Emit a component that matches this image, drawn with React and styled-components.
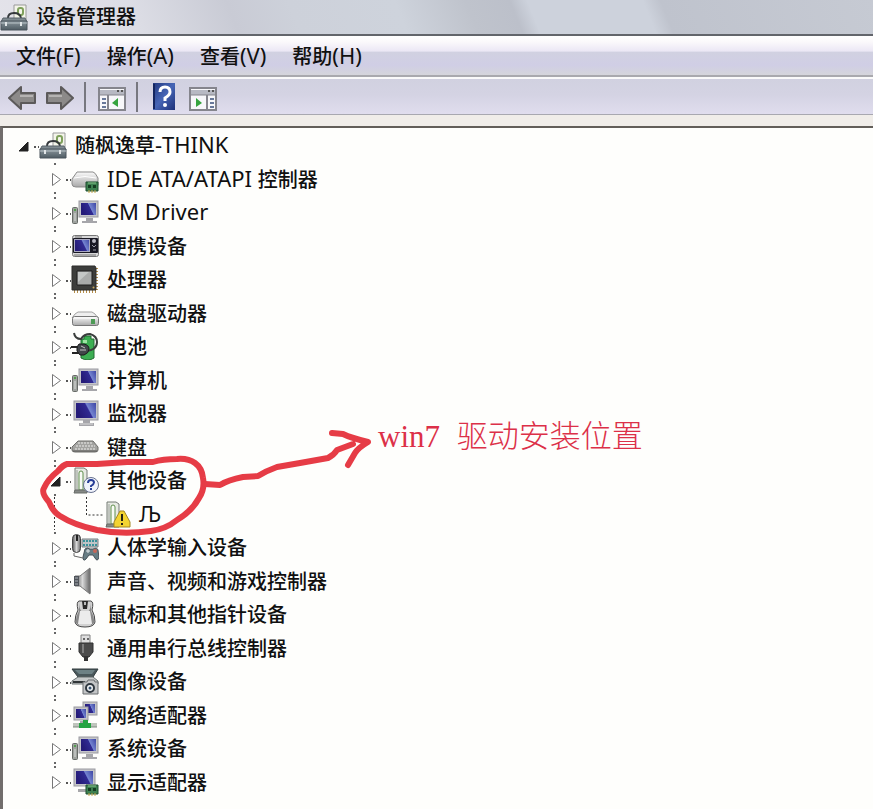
import React, { useState } from 'react';
import styled, { createGlobalStyle } from 'styled-components';

const GlobalStyle = createGlobalStyle`
  * {
    box-sizing: border-box;
  }

  body {
    margin: 0;
    background: #fefefc;
    color: #101010;
    font-family: 'Noto Sans', 'Noto Sans CJK SC', sans-serif;
    font-size: 20px;
    font-weight: 500;
  }

  button {
    padding: 0;
    border: none;
    background: none;
    color: inherit;
    font: inherit;
    cursor: pointer;
  }

  svg {
    display: block;
  }
`;

const Window = styled.div`
  display: flex;
  flex-direction: column;
  min-height: 100vh;
`;

const TitleBar = styled.header`
  display: flex;
  align-items: center;
  gap: 8px;
  height: 36px;
  border-bottom: 2px solid #62656b;
  background: linear-gradient(
    68deg,
    #e4e3ea 0%,
    #dcdde5 16%,
    #c9cbd5 27%,
    #cdd1da 34%,
    #ced3dc 46%,
    #bfc3cc 54%,
    #bcc0ca 59%,
    #cdd2dc 61%,
    #cdd2dc 74%,
    #bfc3cd 76%,
    #c6cad3 100%
  );
`;

const Title = styled.h1`
  margin: 0;
  font-size: 20px;
  font-weight: 500;
  line-height: 36px;
`;

const MenuBar = styled.nav`
  display: flex;
  gap: 26px;
  height: 41px;
  padding: 0 16px;
  border-bottom: 2px solid #a9a9ae;
  background: linear-gradient(#ffffff 0%, #fbf9fb 15%, #ebe7f5 39%, #d1d1e1 41%, #d0cee5 75%, #d5d5db 100%);
`;

const MenuItem = styled.button`
  height: 39px;
  padding-top: 2px;
  line-height: 36px;
`;

const Latin = styled.span`
  font-size: 22px;
  font-weight: 400;
  line-height: 20px;
`;

const ToolBar = styled.div`
  display: flex;
  align-items: center;
  height: 38px;
  padding: 0 8px;
  border-top: 2px solid #fafafa;
  border-bottom: 1px solid #a8a8b0;
  background: linear-gradient(#d1d1e0, #d4d3e3 45%, #e0ddee);
`;

const ToolButton = styled.button`
  margin-right: ${(props) => props.$space || 0}px;
`;

const Separator = styled.span`
  width: 2px;
  height: 30px;
  margin-right: ${(props) => props.$space}px;
  background: #77777f;
`;

const Pane = styled.main`
  position: relative;
  flex: 1;
  margin-top: 11px;
  border-top: 2px solid #625e59;
  border-left: 3px solid #716d6c;
  background: #fefefc;
  box-shadow: 0 -11px 0 #f0ede9;
`;

const Tree = styled.ul`
  margin: 0;
  padding: 0;
  list-style: none;
`;

const TreeRow = styled.li`
  display: flex;
  align-items: center;
  height: 34px;
  padding-left: ${(props) => 9 + props.$level * 32}px;

  &:nth-child(even) {
    height: 33px;
  }
`;

const Expander = styled.button`
  flex: none;
  width: 27px;
  height: 33px;
`;

const Label = styled.span`
  margin-left: 8px;
  padding-top: 2px;
  line-height: 32px;
  white-space: nowrap;
`;

const Scribble = styled.svg`
  position: absolute;
  left: 35px;
  top: 299px;
  pointer-events: none;
`;

const Note = styled.p`
  position: absolute;
  left: 375px;
  top: 287px;
  margin: 0;
  color: #dc3048;
  font-family: 'Liberation Serif', 'Noto Sans CJK SC', serif;
  font-size: 31px;
  font-weight: 300;
  line-height: 44px;
  white-space: nowrap;
`;

const NoteWord = styled.span`
  margin-right: 9px;
`;

const Gradients = () => (
  <svg width="0" height="0" aria-hidden="true">
    <defs>
      <linearGradient id="screen" x1="0" y1="0.4" x2="1" y2="0">
        <stop offset="0" stopColor="#251b78" />
        <stop offset="0.5" stopColor="#302a92" />
        <stop offset="0.56" stopColor="#7484d0" />
        <stop offset="1" stopColor="#3c44a4" />
      </linearGradient>
      <linearGradient id="silver" x1="0" y1="0" x2="0" y2="1">
        <stop offset="0" stopColor="#fafafa" />
        <stop offset="1" stopColor="#a9a9a9" />
      </linearGradient>
      <linearGradient id="steel" x1="0" y1="0" x2="1" y2="0">
        <stop offset="0" stopColor="#555" />
        <stop offset="0.5" stopColor="#d8d8d8" />
        <stop offset="1" stopColor="#666" />
      </linearGradient>
      <linearGradient id="case" x1="0" y1="0" x2="0" y2="1">
        <stop offset="0" stopColor="#8b979d" />
        <stop offset="1" stopColor="#4e5b63" />
      </linearGradient>
      <linearGradient id="help" x1="0" y1="0" x2="1" y2="1">
        <stop offset="0" stopColor="#22397f" />
        <stop offset="0.5" stopColor="#4665b5" />
        <stop offset="1" stopColor="#1c2f78" />
      </linearGradient>
    </defs>
  </svg>
);

const Icon = ({ children }) => (
  <svg width="28" height="28" viewBox="0 0 28 28" fill="none" aria-hidden="true">
    {children}
  </svg>
);

const ToolboxIcon = () => (
  <Icon>
    <path d="M14 2h12v17H14z" fill="#f4f5ea" stroke="#999" />
    <rect x="18" y="5" width="5" height="7" rx="2" stroke="#7fa05c" strokeWidth="2" />
    <path d="M8 15q0-5 6-5t7 5" stroke="#35393c" strokeWidth="2" />
    <path d="M3 15h22l2 4H1z" fill="#7f8a90" stroke="#59636a" />
    <path d="M1 18h26v9H1z" fill="url(#case)" stroke="#4a555c" />
    <path d="M1 20h26" stroke="#b7c1c6" />
    <path d="M6 19v4M21 19v4" stroke="#e1e5e7" strokeWidth="2" />
  </Icon>
);

const Screen = ({ x, y, w, h }) => (
  <>
    <rect x={x} y={y} width={w} height={h} fill="#c5c5c9" stroke="#99999f" />
    <rect x={x + 2} y={y + 2} width={w - 4} height={h - 4} fill="url(#screen)" />
  </>
);

const Tower = () => (
  <>
    <path d="M4 25V2h9l3 2v22z" fill="#e7eae3" stroke="#747a74" />
    <path d="M8 24V7q0-2 2-2t2 2v17z" fill="#f8faf5" stroke="#5f8f4c" />
    <path d="M6 4v20" stroke="#9aa09a" />
    <path d="M4 24h12v3H3z" fill="#858985" stroke="#686c68" />
  </>
);

const BoardIcon = () => (
  <>
    <path d="M15 17h12v9H15z" fill="#3d8050" stroke="#1d4e2e" />
    <path d="M17 20h3v3h-3zM22 20h3v3h-3z" fill="#153c22" />
    <path d="M18 25v3M21 25v3M24 25v3" stroke="#c4a84a" />
    <path d="M17 18h8" stroke="#8bc48f" />
  </>
);

const ComputerIcon = () => (
  <Icon>
    <Screen x={8} y={3} w={19} h={16} />
    <path d="M15 20h7v3h4v2H11v-2h4z" fill="#a6a6aa" />
    <rect x="1.5" y="9.5" width="5" height="16" rx="1" fill="#9ea29e" stroke="#686c68" />
    <path d="M3 12h2" stroke="#55a050" strokeWidth="2" />
    <path d="M4 15v8" stroke="#dadcda" />
  </Icon>
);

const icons = {
  toolbox: ToolboxIcon,
  computer: ComputerIcon,
  ide: () => (
    <Icon>
      <path d="M6 7h16q2 0 5 6v7q0 2-4 2H5q-4 0-4-3v-5z" fill="url(#silver)" stroke="#8b8b8b" />
      <path d="M3 13q11-3 22 0" stroke="#fff" />
      <BoardIcon />
    </Icon>
  ),
  portable: () => (
    <Icon>
      <rect x="1.5" y="3.5" width="26" height="21" rx="2" fill="#d7d7d7" stroke="#777" />
      <rect x="2" y="6" width="25" height="15" rx="1" fill="#191923" />
      <rect x="3.500" y="7.500" width="15" height="12" fill="url(#screen)" stroke="#a9a9c0" />
      <circle cx="23" cy="9" r="2" fill="#b9b9c2" />
      <path d="M21 13l2 2 2-2M22 18h3" stroke="#9a9aa6" />
      <path d="M4 5h7M3 23h22" stroke="#777" />
    </Icon>
  ),
  cpu: () => (
    <Icon>
      <path d="M25 3v22M3 26h22" stroke="#b58d48" strokeWidth="4" strokeDasharray="1 2" />
      <path d="M1 1h23l1 2v22H1z" fill="#3c3d3b" stroke="#2c2d2b" />
      <path d="M6 6h15v14H6z" fill="#a9abaa" stroke="#1f1f1f" />
      <path d="M7 17V7h11z" fill="#c4c7c6" />
      <circle cx="22.5" cy="22.5" r="1" fill="#c8a557" />
    </Icon>
  ),
  disk: () => (
    <Icon>
      <path d="M7 13h14q3 1 6 6H1q3-5 6-6z" fill="#efefef" stroke="#a4a4a4" />
      <rect x="1.5" y="17.5" width="26" height="9" rx="2" fill="url(#silver)" stroke="#777" />
      <path d="M3 19h22" stroke="#fff" />
      <path d="M20 20h4v5h-4z" fill="#4d9b55" />
    </Icon>
  ),
  battery: () => (
    <Icon>
      <path d="M10 7h3V4h7v3h3v19q-6 4-13 0z" fill="#3cae52" stroke="#216b31" />
      <path d="M14 8v3" stroke="#9de3a2" strokeWidth="4" />
      <path d="M3 1q1 6 7 6 3-5 9-5 7 2 7 8 0 8-11 9" stroke="#3a3d3c" strokeWidth="2" />
      <path d="M8 12h5q5 1 5 5t-5 6H9l-3-4v-4z" fill="#42464a" stroke="#1b1b1b" />
      <path d="M0 15h7M1 21h7" stroke="#242424" strokeWidth="2" />
      <path d="M10 14l4 2M9 18h6" stroke="#c4c4c4" />
    </Icon>
  ),
  monitor: () => (
    <Icon>
      <Screen x={3} y={2} w={24} h={19} />
      <path d="M12 21h7v3h4v3H8v-3h4z" fill="#a6a6aa" />
      <path d="M9 25h13" stroke="#dadada" />
    </Icon>
  ),
  keyboard: () => (
    <Icon>
      <path d="M7 8h15l5 6v3q0 2-3 2H4q-3 0-3-2v-3z" fill="#a3a3a0" stroke="#6e6e6b" />
      <path d="M7 10h15M5 13h19M4 16h21" stroke="#ececea" strokeDasharray="2 1" />
      <path d="M2 18h24" stroke="#585856" />
    </Icon>
  ),
  unknown: () => (
    <Icon>
      <Tower />
      <circle cx="20" cy="19" r="7.5" fill="#f0f3fb" stroke="#66708e" />
      <path d="M17 17q0-3 3-3t3 2.500q0 1.500-3 3.500v1M20 22v2" stroke="#263d97" strokeWidth="2" />
    </Icon>
  ),
  warning: () => (
    <Icon>
      <Tower />
      <path d="M17 11h4l6 11v5H11v-5z" fill="#f3d431" stroke="#a48721" strokeLinejoin="round" />
      <path d="M19 14v7M19 23v2" stroke="#272314" strokeWidth="2" />
    </Icon>
  ),
  hid: () => (
    <Icon>
      <path d="M11 6h16v8H11z" fill="#bfc4c6" stroke="#777f82" />
      <path d="M12 8h14M12 12h15" stroke="#3b929a" strokeWidth="2" strokeDasharray="2 1" />
      <path d="M14 16q2-2 5 0h3q4-2 5 1l1 8q-2 4-4 0l-2-3h-4l-3 4q-3 3-3-2z" fill="#687e85" stroke="#465158" />
      <path d="M15 18h4M17 16v4" stroke="#e2e6e8" />
      <circle cx="24" cy="18" r="2" fill="#c56759" />
      <rect x="1.500" y="1.500" width="8" height="18" rx="4" fill="url(#steel)" stroke="#424242" />
      <path d="M6 2v6" stroke="#222" strokeWidth="2" />
      <path d="M3 20v3l9 2" stroke="#666" />
    </Icon>
  ),
  sound: () => (
    <Icon>
      <path d="M4 9h5L19 1v26L9 19H4z" fill="url(#steel)" stroke="#777" />
      <path d="M3 9h5v10H3z" fill="#50545a" />
      <path d="M4 11h3M4 14h3M4 17h3" stroke="#abb0b6" />
      <path d="M19 2v24" stroke="#777" />
    </Icon>
  ),
  mouse: () => (
    <Icon>
      <path d="M8 1h12q3 1 1 9 3 5 3 12-1 5-10 5T4 22q0-7 3-12-2-8 1-9z" fill="#d2d2d2" stroke="#484848" />
      <path d="M8 2q0 7 3 10-4 5-3 13-4-1-3-5 0-4 3-9zM20 2q0 7-3 10 4 5 3 13 4-1 3-5 0-4-3-9z" fill="#888" />
      <path d="M9 11h10l2 13H7z" fill="#ececec" />
      <path d="M11 1h6l-1 8h-4z" fill="#292929" />
      <path d="M14 2v3" stroke="#bbb" strokeWidth="2" />
    </Icon>
  ),
  usb: () => (
    <Icon>
      <path d="M10 1h9v9h-9z" fill="#dedede" stroke="#808080" />
      <path d="M12 4h2v2h-2zM16 4h2v2h-2z" fill="#666" />
      <path d="M8 9h14v9l-4 5h-6l-4-5z" fill="#4b4b4b" stroke="#303030" />
      <path d="M12 10v9" stroke="#7d7d7d" strokeWidth="2" />
      <path d="M15 22v5" stroke="#333" strokeWidth="4" />
    </Icon>
  ),
  imaging: () => (
    <Icon>
      <path d="M1 2h26l-5 8H7z" fill="#49575a" stroke="#303b3d" />
      <path d="M4 3h20l-3 4H8z" fill="#6d8184" />
      <path d="M1 14l6-4h15l5 4v3H1z" fill="#c5c8c8" stroke="#687071" />
      <path d="M2 15h12" stroke="#313638" strokeWidth="2" />
      <path d="M12 15h4l1-2h6l1 2h3v12H12z" fill="#c3c5c6" stroke="#6b6e70" />
      <circle cx="19" cy="21" r="4" fill="#f0f3f5" stroke="#2f383f" strokeWidth="2" />
      <circle cx="19" cy="21" r="1.500" fill="#34506c" />
    </Icon>
  ),
  network: () => (
    <Icon>
      <Screen x={12} y={1} w={14} h={13} />
      <Screen x={3} y={6} w={14} h={13} />
      <path d="M9 20h6v2H9z" fill="#a7a7aa" />
      <path d="M2 24h24" stroke="#bfc5bd" strokeWidth="4" />
      <path d="M2 26h24" stroke="#7d877d" />
      <path d="M12 19h5v3h3v5H8v-5h4z" fill="#26a443" />
    </Icon>
  ),
  display: () => (
    <Icon>
      <Screen x={3} y={1} w={21} h={17} />
      <path d="M11 18h5v3H7v3h9v-6z" fill="#a7a7aa" />
      <BoardIcon />
    </Icon>
  ),
};

const devices = [
  { name: '随枫逸草-THINK', icon: 'toolbox', level: 0, open: true },
  { name: 'IDE ATA/ATAPI 控制器', icon: 'ide', level: 1 },
  { name: 'SM Driver', icon: 'computer', level: 1 },
  { name: '便携设备', icon: 'portable', level: 1 },
  { name: '处理器', icon: 'cpu', level: 1 },
  { name: '磁盘驱动器', icon: 'disk', level: 1 },
  { name: '电池', icon: 'battery', level: 1 },
  { name: '计算机', icon: 'computer', level: 1 },
  { name: '监视器', icon: 'monitor', level: 1 },
  { name: '键盘', icon: 'keyboard', level: 1 },
  { name: '其他设备', icon: 'unknown', level: 1, open: true },
  { name: 'Љ', icon: 'warning', level: 2 },
  { name: '人体学输入设备', icon: 'hid', level: 1 },
  { name: '声音、视频和游戏控制器', icon: 'sound', level: 1 },
  { name: '鼠标和其他指针设备', icon: 'mouse', level: 1 },
  { name: '通用串行总线控制器', icon: 'usb', level: 1 },
  { name: '图像设备', icon: 'imaging', level: 1 },
  { name: '网络适配器', icon: 'network', level: 1 },
  { name: '系统设备', icon: 'computer', level: 1 },
  { name: '显示适配器', icon: 'display', level: 1, last: true },
];

const menus = ['文件(F)', '操作(A)', '查看(V)', '帮助(H)'];

// Latin letters are set a little larger than the Chinese ones
const MixedText = ({ text }) =>
  text
    .split(/([\x20-\x7e\u0400-\u04ff]+)/)
    .filter(Boolean)
    .map((part) => (/^[\x20-\x7e\u0400-\u04ff]/.test(part) ? <Latin key={part}>{part}</Latin> : part));

// Dotted connectors and the triangle in front of a tree item
const Guide = ({ level, open, last }) => (
  <svg width="27" height="33" viewBox="0 0 27 33" fill="none" overflow="visible" aria-hidden="true">
    {level === 2 ? (
      <path d="M10.500 0v18H27M-21.500 0v33" stroke="#333" strokeDasharray="2 2" />
    ) : (
      <>
        {level === 1 && <path d="M10 1h2v2h-2z" fill="#666" />}
        {level === 1 && !last && <path d="M10 30h2v2h-2z" fill="#666" />}
        <path d="M22 17h2v2h-2zM26 17h1v2h-1z" fill="#555" />
        {open ? (
          <path d="M16 13v9H7z" fill="#222" stroke="#222" />
        ) : (
          <path d="M8.500 11.500v12l8-6z" fill="#fff" stroke="#777" />
        )}
      </>
    )}
  </svg>
);

const ArrowIcon = ({ flip }) => (
  <svg width="28" height="28" viewBox="0 0 28 28" aria-hidden="true">
    <path
      d={flip ? 'M27 15L15 4v6H1v10h14v6z' : 'M1 15L13 4v6h14v10H13v6z'}
      fill="#8c8a89"
      stroke="#5c5a5a"
      strokeWidth="2"
      strokeLinejoin="round"
    />
    <path d={flip ? 'M3 13h13' : 'M12 13h13'} stroke="#b5b3b2" strokeWidth="2" />
  </svg>
);

const PanelIcon = ({ right }) => (
  <svg width="28" height="28" viewBox="0 0 28 28" fill="none" aria-hidden="true">
    <path d="M1 5h26v22H1z" fill="#f7f7fa" stroke="#85858d" strokeWidth="2" />
    <path d="M2 7h24v5H2z" fill="#b7b9c3" />
    <path d="M2 12h24" stroke="#85858d" />
    <path d="M19 8h2M23 8h2" stroke="#555" strokeWidth="2" />
    <path d={right ? 'M18 12v15' : 'M10 12v15'} stroke="#85858d" strokeWidth="2" />
    <path d={right ? 'M21 16h4M21 20h4M21 24h4' : 'M4 16h4M4 20h4M4 24h4'} stroke="#68789a" strokeWidth="2" />
    <path d={right ? 'M7 15v9l6-4z' : 'M20 15v9l-6-4z'} fill="#35a33e" />
  </svg>
);

const HelpIcon = () => (
  <svg width="22" height="27" viewBox="0 0 22 27" fill="none" aria-hidden="true">
    <path d="M0 0h22v27H0z" fill="url(#help)" />
    <path d="M1 1v25" stroke="#14265f" strokeWidth="2" />
    <path d="M7 9q0-5 5-5t5 5q0 3-5 6v3" stroke="#fff" strokeWidth="3" />
    <circle cx="12" cy="22" r="2" fill="#fff" />
  </svg>
);

const App = () => {
  const [selected, setSelected] = useState(null);

  return (
    <Window>
      <GlobalStyle />
      <TitleBar>
        <ToolboxIcon />
        <Title>设备管理器</Title>
      </TitleBar>
      <MenuBar>
        {menus.map((menu) => (
          <MenuItem key={menu} type="button">
            <MixedText text={menu} />
          </MenuItem>
        ))}
      </MenuBar>
      <ToolBar>
        <ToolButton type="button" aria-label="后退" $space={10}><ArrowIcon /></ToolButton>
        <ToolButton type="button" aria-label="前进" $space={10}><ArrowIcon flip /></ToolButton>
        <Separator $space={12} />
        <ToolButton type="button" aria-label="控制台树" $space={10}><PanelIcon /></ToolButton>
        <Separator $space={15} />
        <ToolButton type="button" aria-label="帮助" $space={14}><HelpIcon /></ToolButton>
        <ToolButton type="button" aria-label="操作窗格"><PanelIcon right /></ToolButton>
      </ToolBar>
      <Pane>
        <Tree role="tree">
          {devices.map((device) => {
            const DeviceIcon = icons[device.icon];
            return (
              <TreeRow
                key={device.name}
                role="treeitem"
                aria-level={device.level + 1}
                aria-selected={selected === device.name}
                $level={device.level}
                onClick={() => setSelected(device.name)}
              >
                <Expander type="button" aria-label={device.name}>
                  <Guide level={device.level} open={device.open} last={device.last} />
                </Expander>
                <DeviceIcon />
                <Label>
                  <MixedText text={device.name} />
                </Label>
              </TreeRow>
            );
          })}
        </Tree>
        <Scribble width="340" height="112" viewBox="38 427 340 112" fill="none" stroke="#e63c46" strokeLinecap="round" strokeLinejoin="round" aria-hidden="true">
          <path
            d="M67 464H97L127 462L153 462Q163 459 177 459Q188 458 195 463Q202 468 203 478Q205 489 199 498Q192 511 177 520Q166 529 151 531Q123 535 97 530Q74 525 60 516Q53 512 49 502Q41 493 44 488Q48 479 58 471Q63 465 67 464"
            strokeWidth="6"
          />
          <path
            d="M205 484L220 485Q228 480 243 477L258 476Q266 471 277 467L300 463L328 458Q334 455 337 450L353 444M332 433L343 434Q351 438 368 442Q358 448 355 453L348 465"
            strokeWidth="6"
          />
        </Scribble>
        <Note><NoteWord>win7</NoteWord> 驱动安装位置</Note>
      </Pane>
      <Gradients />
    </Window>
  );
};

export default App;
